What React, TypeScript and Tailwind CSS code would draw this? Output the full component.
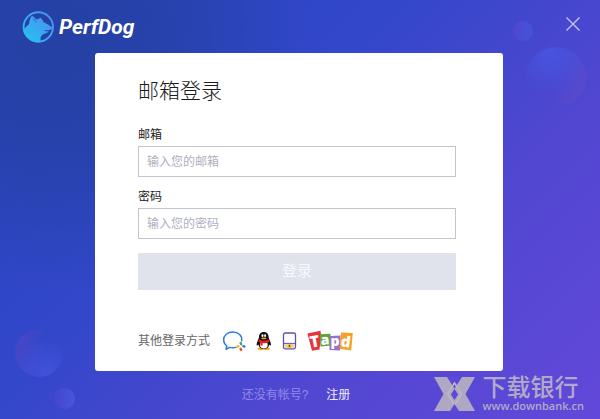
import type { ReactNode } from 'react';

interface FieldProps {
  id: string;
  label: string;
  type: string;
  placeholder: string;
}

function Field({ id, label, type, placeholder }: FieldProps) {
  return (
    <div>
      <label htmlFor={id} className="block mb-px text-xs leading-5 text-[#222222]">
        {label}
      </label>
      <input
        id={id}
        type={type}
        placeholder={placeholder}
        className="block w-full h-[31px] px-2 text-xs bg-white border border-[#c3c4d0] outline-none placeholder:text-[#aeb0c0]"
      />
    </div>
  );
}

function DogLogo() {
  return (
    <svg viewBox="0 0 32 32" className="size-8" aria-hidden="true">
      <defs>
        <linearGradient id="dog" x1="0" y1="1" x2="1" y2="0">
          <stop offset="0" stopColor="#27c4f0" />
          <stop offset="1" stopColor="#4a8df2" />
        </linearGradient>
      </defs>
      <circle cx="16.3" cy="16" r="14.7" fill="none" stroke="url(#dog)" strokeWidth="1.9" />
      <path
        d="M9.800 4.800C11.800 5.800 13.200 7.200 14.200 8.600C15.800 8.200 17.400 7.600 18.600 6.800C20 8 21 9.400 21.400 11C24.600 12.800 27.600 14.400 30.400 16.400C30 18 29 18.800 27.600 19L21.600 19.400C23.400 20.200 25.400 20.400 27 20.200C25.600 22 23.600 22.400 21.800 23C18.800 24.400 18 27 18.800 30.400C10 31.600 2.800 25.600 1.800 18.600C3 16.600 5 15 7 13C7.400 10 8.200 7 9.800 4.800Z"
        fill="url(#dog)"
      />
      <path d="M11.200 7.600C12.600 8.600 13.400 9.800 13.800 11.400" fill="none" stroke="#2a50b8" strokeWidth="0.7" />
    </svg>
  );
}

function WeComIcon() {
  return (
    <svg viewBox="0 0 24 22" className="w-6 h-[22px]" aria-hidden="true">
      <path
        d="M19.6 10.800C20.600 5.600 16.400 2 10.800 2C5.600 2 1.600 5.400 1.600 9.800C1.600 12.600 3 14.600 4.800 16L4 19.200L7.800 17.400C9.800 18 12 18 14 17.400"
        fill="none"
        stroke="#2b7fd6"
        strokeWidth="1.5"
        strokeLinecap="round"
        strokeLinejoin="round"
      />
      <g strokeWidth="2.400" strokeLinecap="round">
        <path d="M18.600 13L19.200 14.200" stroke="#3fae49" />
        <path d="M21.400 16.200L22.400 16.600" stroke="#2b7fd6" />
        <path d="M18.600 18.800L19.200 19.800" stroke="#ef4b2f" />
        <path d="M15.400 16.600L16.400 16" stroke="#fbb41a" />
      </g>
    </svg>
  );
}

function QQIcon() {
  return (
    <svg viewBox="0 0 16 20" className="w-4 h-5" aria-hidden="true">
      <ellipse cx="5" cy="17.800" rx="3.400" ry="1.400" fill="#f7a81b" />
      <ellipse cx="10.600" cy="17.800" rx="3.400" ry="1.400" fill="#f7a81b" />
      <path d="M7.800 1C4.600 1 3 3.200 3 6.200C2.800 8.200 0.800 10.600 0.600 13.400C0.600 14.800 1.600 14.800 2.400 13.400C2.800 16.400 5 18 7.800 18C10.600 18 12.800 16.400 13.200 13.400C14 14.800 15 14.800 15 13.400C14.800 10.600 12.800 8.200 12.600 6.200C12.600 3.200 11 1 7.800 1Z" fill="#111111" />
      <ellipse cx="7.800" cy="13.800" rx="3.900" ry="3.800" fill="#ffffff" />
      <path d="M2.800 8.600C6 10 9.600 10 12.800 8.600L13.200 11C11 12 8.600 12.300 6.600 12.100V14.800L4.400 14.400V11.600L2.400 10.800Z" fill="#ea1c24" />
      <ellipse cx="6.500" cy="4.700" rx="1" ry="1.400" fill="#ffffff" />
      <ellipse cx="9.100" cy="4.700" rx="1" ry="1.400" fill="#ffffff" />
      <ellipse cx="7.800" cy="7.300" rx="2.700" ry="0.900" fill="#f7a81b" />
    </svg>
  );
}

function PhoneIcon() {
  return (
    <svg viewBox="0 0 15 18" className="w-[15px] h-[18px]" aria-hidden="true">
      <rect x="1.500" y="1" width="12" height="15.800" rx="1.800" fill="#ffffff" stroke="#5a50b8" strokeWidth="1.300" />
      <rect x="2.200" y="11.600" width="10.600" height="4.500" fill="#e9d9a0" />
      <path d="M1.500 11.400H13.500" stroke="#5a50b8" strokeWidth="1" />
      <circle cx="7.500" cy="13.900" r="1.900" fill="#f4b81c" />
      <circle cx="7.500" cy="13.900" r="0.800" fill="#4a4020" />
    </svg>
  );
}

function TapdIcon() {
  return (
    <svg viewBox="0 0 46 22" className="w-[46px] h-[22px] overflow-visible" fontFamily="'Open Sans', 'Liberation Sans', sans-serif" fontWeight="800" fill="#ffffff" aria-hidden="true">
      <path d="M0.400 3.600L13.400 0.800L14.400 6L12.400 19.400L5 20.800Z" fill="#e8333a" />
      <path d="M13 4.200L23.400 3.800L24.200 15.600L13.400 16.400Z" fill="#5aa63c" />
      <path d="M23 6L33.600 5.400L33 20.400L22.400 20Z" fill="#9273cf" />
      <path d="M34 2.600L45.800 3L44.200 20.400L32.400 18.800Z" fill="#f6a02c" />
      <text x="3" y="17" fontSize="16" transform="rotate(-10 8 12)">T</text>
      <text x="13.500" y="14.500" fontSize="14" transform="rotate(-5 18 10)">a</text>
      <text x="23.500" y="16" fontSize="14">p</text>
      <text x="34" y="17" fontSize="15" transform="rotate(8 39 12)">d</text>
    </svg>
  );
}

const providers: { name: string; icon: ReactNode }[] = [
  { name: '企业微信', icon: <WeComIcon /> },
  { name: 'QQ', icon: <QQIcon /> },
  { name: '手机', icon: <PhoneIcon /> },
  { name: 'Tapd', icon: <TapdIcon /> },
];

function Bubbles() {
  return (
    <div aria-hidden="true">
      <div className="absolute top-[21px] right-[67px] size-5 rounded-full bg-linear-to-r from-[#5148cc] to-[#4353de]" />
      <div className="absolute top-[47px] right-[14px] size-[60px] rounded-full bg-[radial-gradient(circle_at_40%_10%,#4854de_0%,#4854de00_65%),linear-gradient(100deg,#5a4acc00_50%,#5a4acc_100%)]" />
      <div className="absolute bottom-[42px] left-[15px] size-12 rounded-full bg-[radial-gradient(circle_at_65%_95%,#4253da_0%,#4253da00_65%),linear-gradient(100deg,#4a47c6_0%,#4a47c600_60%)]" />
      <div className="absolute bottom-[10px] left-[54px] size-[21px] rounded-full bg-linear-to-r from-[#4646cb] to-[#4556de]" />
    </div>
  );
}

function Watermark() {
  return (
    <div className="absolute right-4 bottom-[7px] flex items-center gap-2 text-[#b0aac8]">
      <svg viewBox="0 0 41 34" className="w-[41px] h-[34px]" aria-hidden="true">
        <g fill="#aea8c2">
          <path d="M0 0H13L35 34H24L20.500 28L17 34H0L9.500 17Z" />
          <path d="M41 0H28L6 34H17L20.500 28L24 34H41L31.500 17Z" />
        </g>
        <path d="M14.200 0L20.500 10L26.800 0Z" fill="#5d49d5" />
        <path d="M20.500 6L27.500 17L20.500 28L13.500 17Z" fill="none" stroke="#bdb7c9" strokeWidth="1.500" />
        <path d="M20.500 12L24 17.500L20.500 23L17 17.500Z" fill="#5d49d5" />
        <path d="M16 34L20.500 27L25 34Z" fill="#5d49d5" />
      </svg>
      <div className="flex flex-col">
        <span className="text-2xl leading-6 font-medium">下载银行</span>
        <span className="font-['Open_Sans','Liberation_Sans',sans-serif] text-[11px] leading-3 font-semibold">www.downbank.cn</span>
      </div>
    </div>
  );
}

export default function App() {
  return (
    <div className="relative min-h-screen overflow-hidden font-['Liberation_Sans','Noto_Sans_CJK_SC',sans-serif] bg-[radial-gradient(circle_at_10%_10%,#2541a4_0%,#2541a4cc_15%,#2541a400_38%),linear-gradient(135deg,#2a44c2_0%,#3247ca_38%,#5147d1_68%,#6248da_100%)]">
      <Bubbles />

      <header className="relative flex h-[53px] items-start justify-between pt-[11px] pl-[22px] pr-[19px]">
        <div className="flex items-center gap-[5px]">
          <DogLogo />
          <span className="font-[Roboto,'Liberation_Sans',sans-serif] text-[21px] leading-8 font-bold italic text-white">PerfDog</span>
        </div>
        <button type="button" aria-label="关闭" className="mt-[5px] text-[#c3c3f0]">
          <svg viewBox="0 0 16 16" className="size-4" fill="none" stroke="currentColor" strokeWidth="1.400" aria-hidden="true">
            <path d="M1.500 1.500L14.500 14.500M14.500 1.500L1.500 14.500" />
          </svg>
        </button>
      </header>

      <main className="relative pl-[95px] pr-[97px]">
        <form className="rounded-[3px] bg-white pt-[22px] pr-[47px] pb-[18px] pl-[43px]">
          <h1 className="mb-[18px] text-[21px] leading-8 font-light text-[#1c1c1c]">邮箱登录</h1>
          <div className="flex flex-col gap-[10px]">
            <Field id="email" label="邮箱" type="email" placeholder="输入您的邮箱" />
            <Field id="password" label="密码" type="password" placeholder="输入您的密码" />
          </div>
          <button type="submit" className="mt-[14px] block h-[37px] w-full bg-[#e0e3ec] text-[15px] text-[#f8f9fc]">
            登录
          </button>
          <div className="mt-[39px] flex h-6 items-center gap-3">
            <span className="text-xs text-[#666666]">其他登录方式</span>
            <div className="flex items-center gap-[10px]">
              {providers.map((p) => (
                <button key={p.name} type="button" aria-label={p.name}>
                  {p.icon}
                </button>
              ))}
            </div>
          </div>
        </form>
      </main>

      <footer className="relative flex justify-center gap-[18px] pt-[14px] pr-[8px] text-xs leading-5">
        <span className="text-[#9188ea]">还没有帐号?</span>
        <a href="#register" className="text-[#eeecff]">注册</a>
      </footer>

      <Watermark />
    </div>
  );
}
